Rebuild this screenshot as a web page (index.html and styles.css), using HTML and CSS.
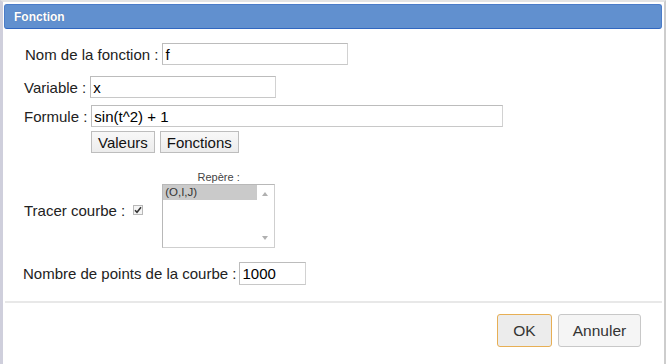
FILE: index.html
```html
<!DOCTYPE html>
<html lang="fr">
<head>
<meta charset="utf-8">
<title>Fonction</title>
<link rel="stylesheet" href="styles.css">
</head>
<body>
<div class="window">
  <div class="titlebar"><span class="title">Fonction</span></div>
  <div class="form">
    <div class="row row-nom">
      <span class="label label-nom">Nom de la fonction :</span>
      <span class="input input-nom">f</span>
    </div>
    <div class="row row-var">
      <span class="label">Variable :</span>
      <span class="input input-var">x</span>
    </div>
    <div class="row row-formule">
      <span class="label">Formule :</span>
      <span class="input input-formule">sin(t^2) + 1</span>
    </div>
    <div class="row row-btns">
      <span class="btn">Valeurs</span>
      <span class="btn">Fonctions</span>
    </div>
    <div class="row row-tracer">
      <span class="label label-tracer">Tracer courbe :</span>
      <span class="check">
        <svg width="8" height="8" viewBox="0 0 8 8"><path d="M1 4.2 L3 6.3 L7 1.3" fill="none" stroke="#333" stroke-width="1.6"/></svg>
      </span>
      <div class="repere">
        <div class="repere-label">Repère :</div>
        <div class="listbox">
          <div class="list-item selected">(O,I,J)</div>
          <span class="arrow arrow-up"></span>
          <span class="arrow arrow-down"></span>
        </div>
      </div>
    </div>
    <div class="row row-points">
      <span class="label label-points">Nombre de points de la courbe :</span>
      <span class="input input-points">1000</span>
    </div>
  </div>
  <div class="separator"></div>
  <div class="footer">
    <span class="dbtn dbtn-ok">OK</span>
    <span class="dbtn dbtn-cancel">Annuler</span>
  </div>
</div>
</body>
</html>
```

FILE: styles.css
```css
html, body {
  margin: 0;
  padding: 0;
  background: #ffffff;
}
body {
  width: 666px;
  height: 364px;
  overflow: hidden;
  font-family: "Liberation Sans", Arial, sans-serif;
}
.window {
  box-sizing: border-box;
  width: 666px;
  height: 364px;
  border-left: 3px solid #cfcfdc;
  border-right: 2px solid #cdcdcd;
  border-top: 2px solid #e4e4e4;
  background: #fff;
}
.titlebar {
  box-sizing: border-box;
  margin: 2px 2px 0 1px;
  height: 25px;
  background: #6190cf;
  border: 1px solid #4b7cc8;
  border-bottom-color: #3167c0;
  border-radius: 3px;
  display: flex;
  align-items: center;
  padding-left: 9px;
}
.title {
  color: #fff;
  font-weight: bold;
  font-size: 12px;
  text-shadow: 0 0 1px rgba(0,0,0,0.25);
}
.form {
  padding: 14px 0 0 21px;
}
.row {
  display: flex;
  align-items: center;
}
.label {
  font-size: 15px;
  color: #222;
  white-space: nowrap;
}
.label-nom {
  margin-left: 1px;
  margin-right: 4px;
}
.input {
  box-sizing: border-box;
  height: 22px;
  border: 1px solid #bcbcbc;
  border-right-color: #d2d2d2;
  border-bottom-color: #c8c8c8;
  font-size: 15px;
  color: #000;
  padding: 0 2px;
  display: flex;
  align-items: center;
  background: #fff;
}
.input-nom { width: 186px; }
.row-var { margin-top: 11px; }
.row-var .label { margin-right: 4px; }
.input-var { width: 186px; }
.row-formule { margin-top: 7px; }
.row-formule .label { margin-right: 4px; }
.input-formule { width: 412px; }
.row-btns {
  margin-top: 4px;
  padding-left: 67px;
  gap: 5px;
}
.btn {
  box-sizing: border-box;
  height: 22px;
  padding: 0 6px;
  border: 1px solid #bdbdbd;
  background: linear-gradient(#f8f8f8, #ececec);
  font-size: 15px;
  color: #111;
  display: flex;
  align-items: center;
}
.row-tracer {
  margin-top: 18px;
  align-items: center;
}
.label-tracer {
  margin-top: 2px;
}
.check {
  box-sizing: border-box;
  width: 10px;
  height: 10px;
  border: 1px solid #b8b8b8;
  background: #f4f4f4;
  margin: 0 0 0 8px;
  display: flex;
  align-items: center;
  justify-content: center;
}
.repere {
  margin-left: 19px;
  width: 113px;
  display: flex;
  flex-direction: column;
}
.repere-label {
  font-size: 11px;
  color: #444;
  text-align: center;
  height: 13px;
  line-height: 13px;
}
.listbox {
  position: relative;
  box-sizing: border-box;
  height: 64px;
  border: 1px solid #b8b8b8;
  border-right-color: #cfcfcf;
  border-bottom-color: #cfcfcf;
  background: #fff;
}
.list-item {
  height: 15px;
  line-height: 14px;
  font-size: 11.5px;
  color: #333;
  padding-left: 2px;
  margin-right: 17px;
}
.list-item.selected {
  background: #cacaca;
}
.arrow {
  position: absolute;
  right: 6px;
  width: 0;
  height: 0;
  border-left: 3.5px solid transparent;
  border-right: 3.5px solid transparent;
}
.arrow-up {
  top: 7px;
  border-bottom: 4px solid #b0b0b0;
}
.arrow-down {
  bottom: 7px;
  border-top: 4px solid #b0b0b0;
}
.row-points {
  margin-top: 14px;
}
.label-points {
  margin-left: -1px;
  margin-right: 3px;
}
.input-points {
  width: 67px;
  height: 23px;
}
.separator {
  margin: 16px 2px 0 2px;
  height: 2px;
  background: #e8e8e8;
}
.footer {
  display: flex;
  justify-content: flex-end;
  gap: 6px;
  padding: 11px 23px 0 0;
}
.dbtn {
  box-sizing: border-box;
  height: 33px;
  border-radius: 3px;
  font-size: 15.5px;
  color: #333;
  display: flex;
  align-items: center;
  justify-content: center;
}
.dbtn-ok {
  width: 55px;
  background: #ececec;
  border: 1px solid #e7af55;
}
.dbtn-cancel {
  width: 83px;
  background: #f5f5f5;
  border: 1px solid #c8c8c8;
}
```
